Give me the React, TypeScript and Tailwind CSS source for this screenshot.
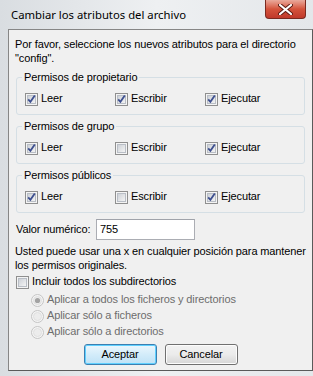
import React from 'react'

const ui = { fontFamily: '"Liberation Sans", Arial, sans-serif' }
const titleFont = { fontFamily: '"Noto Sans", "Open Sans", sans-serif' }

function CheckBox({ checked }: { checked: boolean }) {
  return (
    <svg width="13" height="13" viewBox="0 0 13 13" className="shrink-0">
      <defs>
        <linearGradient id="cbfill" x1="0" y1="0" x2="1" y2="1">
          <stop offset="0" stopColor="#cbcfd5" />
          <stop offset="1" stopColor="#f6f6f6" />
        </linearGradient>
      </defs>
      <rect x="0.5" y="0.5" width="12" height="12" fill="#f4f4f4" stroke="#8f8f8f" />
      <rect x="2.5" y="2.5" width="8" height="8" fill="url(#cbfill)" stroke="#b9bec6" />
      {checked && (
        <path d="M3.2 6.4 L5.4 8.8 L9.8 2.6" fill="none" stroke="#3d4f8f" strokeWidth="1.8" />
      )}
    </svg>
  )
}

function Radio({ checked }: { checked: boolean }) {
  return (
    <svg width="13" height="13" viewBox="0 0 13 13" className="shrink-0">
      <circle cx="6.5" cy="6.5" r="6" fill="#f4f4f4" stroke="#c4c4c4" />
      <circle cx="6.5" cy="6.5" r="4" fill="#ececec" stroke="#e0e0e0" />
      {checked && <circle cx="6.5" cy="6.5" r="2.6" fill="#a3a3a3" />}
    </svg>
  )
}

function Check({ label, checked, w }: { label: string; checked: boolean; w: string }) {
  return (
    <div className={`flex items-center gap-[3px] ${w}`}>
      <CheckBox checked={checked} />
      <span>{label}</span>
    </div>
  )
}

function Group({ title, perms }: { title: string; perms: boolean[] }) {
  return (
    <fieldset className="mx-[7px] h-[45px] rounded-[3px] border border-[#d5dfe5] pl-[8px]">
      <legend className="ml-[-3px] px-[2px] leading-[14px]">{title}</legend>
      <div className="mt-[8px] flex h-[14px] items-center">
        <Check label="Leer" checked={perms[0]} w="w-[90px]" />
        <Check label="Escribir" checked={perms[1]} w="w-[90px]" />
        <Check label="Ejecutar" checked={perms[2]} w="w-[90px]" />
      </div>
    </fieldset>
  )
}

function RadioRow({ label, checked }: { label: string; checked: boolean }) {
  return (
    <div className="flex h-[16px] items-center gap-[3px] text-[#6d6d6d]">
      <Radio checked={checked} />
      <span>{label}</span>
    </div>
  )
}

export default function App() {
  return (
    <div
      className="relative h-[376px] w-[313px] overflow-hidden bg-gradient-to-r from-[#d9dde1] via-[#eef0f2] to-[#e4e7ea] text-[11px] tracking-[-0.12px] text-black"
      style={ui}
    >
      {/* title bar */}
      <div className="flex h-[29px] items-start justify-between">
        <div className="pl-[11px] pt-[6px] text-[11.3px] leading-[17px] tracking-normal" style={titleFont}>
          Cambiar los atributos del archivo
        </div>
        <div className="mr-[7px] flex h-[19px] w-[41px] items-center justify-center rounded-b-[4px] border border-t-0 border-[#7a2a20] bg-gradient-to-b from-[#e9a99c] via-[#d4533c] to-[#c0392b]">
          <svg width="15" height="11" viewBox="0 0 15 11">
            <path d="M2 1 L13 10 M13 1 L2 10" stroke="#5a1a12" strokeWidth="4" strokeLinecap="round" />
            <path d="M2 1 L13 10 M13 1 L2 10" stroke="#ffffff" strokeWidth="2.2" strokeLinecap="round" />
          </svg>
        </div>
      </div>

      {/* client area */}
      <div className="ml-[8px] h-[342px] w-[305px] border border-[#868686] border-r-[#5a5a5a] border-b-[#5a5a5a] bg-[#f0f0f0] leading-[13.5px]">
        <div className="px-[6px] pt-[8px]">
          Por favor, seleccione los nuevos atributos para el directorio "config".
        </div>

        <div className="mt-[5px] flex flex-col gap-[4px]">
          <Group title="Permisos de propietario" perms={[true, true, true]} />
          <Group title="Permisos de grupo" perms={[true, false, true]} />
          <Group title="Permisos públicos" perms={[true, false, true]} />
        </div>

        <div className="mt-[6px] flex items-center px-[7px]">
          <span className="w-[80px] shrink-0">Valor numérico:</span>
          <div className="flex h-[21px] w-[99px] items-center border border-[#abadb3] border-t-[#a0a3aa] bg-white px-[3px]">
            755
          </div>
        </div>

        <div className="mt-[5px] pl-[6px] pr-[2px]">
          Usted puede usar una x en cualquier posición para mantener los permisos originales.
        </div>

        <div className="mt-[2px] flex h-[16px] items-center gap-[3px] px-[7px]">
          <CheckBox checked={false} />
          <span>Incluir todos los subdirectorios</span>
        </div>

        <div className="mt-[2px] flex flex-col pl-[22px]">
          <RadioRow label="Aplicar a todos los ficheros y directorios" checked />
          <RadioRow label="Aplicar sólo a ficheros" checked={false} />
          <RadioRow label="Aplicar sólo a directorios" checked={false} />
        </div>

        <div className="mt-[4px] flex justify-center gap-[8px]">
          <button className="h-[21px] w-[73px] rounded-[3px] border border-[#3c7fb1] bg-gradient-to-b from-[#ecf7fd] via-[#d3ecfa] to-[#bfe2f6] shadow-[inset_0_0_0_1px_#5fd0ff]">
            Aceptar
          </button>
          <button className="h-[21px] w-[73px] rounded-[3px] border border-[#707070] bg-gradient-to-b from-[#f2f2f2] via-[#ebebeb] to-[#d6d6d6] shadow-[inset_0_0_0_1px_#fcfcfc]">
            Cancelar
          </button>
        </div>
      </div>
    </div>
  )
}
